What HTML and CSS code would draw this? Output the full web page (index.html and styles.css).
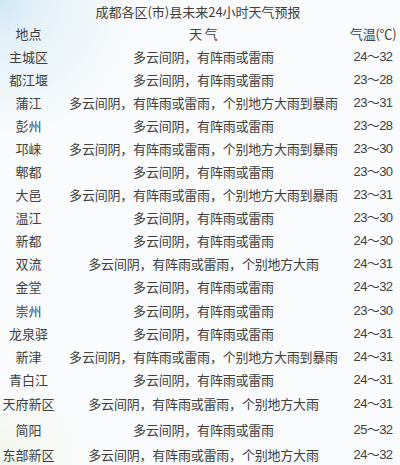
FILE: index.html
```html
<!DOCTYPE html>
<html lang="zh-CN">
<head>
<meta charset="utf-8">
<title>成都各区(市)县未来24小时天气预报</title>
<link rel="stylesheet" href="styles.css">
</head>
<body>
<div class="page">
  <h1 class="title">成都各区(市)县未来24小时天气预报</h1>
  <div class="table">
    <div class="row head"><span class="loc">地点</span><span class="wx">天 气</span><span class="temp">气温(℃)</span></div>
    <div class="row"><span class="loc">主城区</span><span class="wx">多云间阴，有阵雨或雷雨</span><span class="temp">24～32</span></div>
    <div class="row"><span class="loc">都江堰</span><span class="wx">多云间阴，有阵雨或雷雨</span><span class="temp">23～28</span></div>
    <div class="row"><span class="loc">蒲江</span><span class="wx">多云间阴，有阵雨或雷雨，个别地方大雨到暴雨</span><span class="temp">23～31</span></div>
    <div class="row"><span class="loc">彭州</span><span class="wx">多云间阴，有阵雨或雷雨</span><span class="temp">23～28</span></div>
    <div class="row"><span class="loc">邛崃</span><span class="wx">多云间阴，有阵雨或雷雨，个别地方大雨到暴雨</span><span class="temp">23～30</span></div>
    <div class="row"><span class="loc">郫都</span><span class="wx">多云间阴，有阵雨或雷雨</span><span class="temp">23～30</span></div>
    <div class="row"><span class="loc">大邑</span><span class="wx">多云间阴，有阵雨或雷雨，个别地方大雨到暴雨</span><span class="temp">23～31</span></div>
    <div class="row"><span class="loc">温江</span><span class="wx">多云间阴，有阵雨或雷雨</span><span class="temp">23～30</span></div>
    <div class="row"><span class="loc">新都</span><span class="wx">多云间阴，有阵雨或雷雨</span><span class="temp">24～30</span></div>
    <div class="row"><span class="loc">双流</span><span class="wx">多云间阴，有阵雨或雷雨，个别地方大雨</span><span class="temp">24～31</span></div>
    <div class="row"><span class="loc">金堂</span><span class="wx">多云间阴，有阵雨或雷雨</span><span class="temp">24～32</span></div>
    <div class="row"><span class="loc">崇州</span><span class="wx">多云间阴，有阵雨或雷雨</span><span class="temp">23～30</span></div>
    <div class="row"><span class="loc">龙泉驿</span><span class="wx">多云间阴，有阵雨或雷雨</span><span class="temp">24～31</span></div>
    <div class="row"><span class="loc">新津</span><span class="wx">多云间阴，有阵雨或雷雨，个别地方大雨到暴雨</span><span class="temp">24～31</span></div>
    <div class="row"><span class="loc">青白江</span><span class="wx">多云间阴，有阵雨或雷雨</span><span class="temp">24～31</span></div>
    <div class="row tall"><span class="loc">天府新区</span><span class="wx">多云间阴，有阵雨或雷雨，个别地方大雨</span><span class="temp">24～31</span></div>
    <div class="row tall"><span class="loc">简阳</span><span class="wx">多云间阴，有阵雨或雷雨</span><span class="temp">25～32</span></div>
    <div class="row"><span class="loc">东部新区</span><span class="wx">多云间阴，有阵雨或雷雨，个别地方大雨</span><span class="temp">24～32</span></div>
  </div>
</div>
</body>
</html>
```

FILE: styles.css
```css
html, body {
  margin: 0;
  padding: 0;
}
body {
  width: 400px;
  height: 465px;
  overflow: hidden;
  background:
    radial-gradient(circle at 0 0, #cfe8f6 0, #e4f1f8 40px, rgba(246,250,252,0) 140px),
    radial-gradient(circle at 0 100%, #f3f6ec 0, rgba(250,251,250,0) 90px),
    #f9fbfc;
  font-family: "Noto Sans CJK SC", "Noto Sans", sans-serif;
  font-size: 13px;
  color: #404040;
}
.page {
  padding-top: 1px;
}
.title {
  margin: 0;
  height: 22px;
  line-height: 22px;
  font-size: 13px;
  font-weight: normal;
  text-align: center;
  padding-right: 4px;
}
.table {
  display: flex;
  flex-direction: column;
}
.row {
  display: grid;
  grid-template-columns: 57px 293px 46px;
  height: 23.1px;
  line-height: 23.1px;
  align-items: center;
  white-space: nowrap;
}
.row.head {
  height: 21px;
  line-height: 21px;
  margin-bottom: 0.5px;
}
.row.tall {
  height: 26px;
  line-height: 26px;
}
.loc, .wx, .temp {
  text-align: center;
}
.wx {
  letter-spacing: -0.2px;
}
.temp {
  font-family: "Liberation Sans", "Noto Sans CJK SC", sans-serif;
  letter-spacing: -0.6px;
}
.head .temp {
  font-family: "Noto Sans CJK SC", sans-serif;
  letter-spacing: -0.3px;
}
```
